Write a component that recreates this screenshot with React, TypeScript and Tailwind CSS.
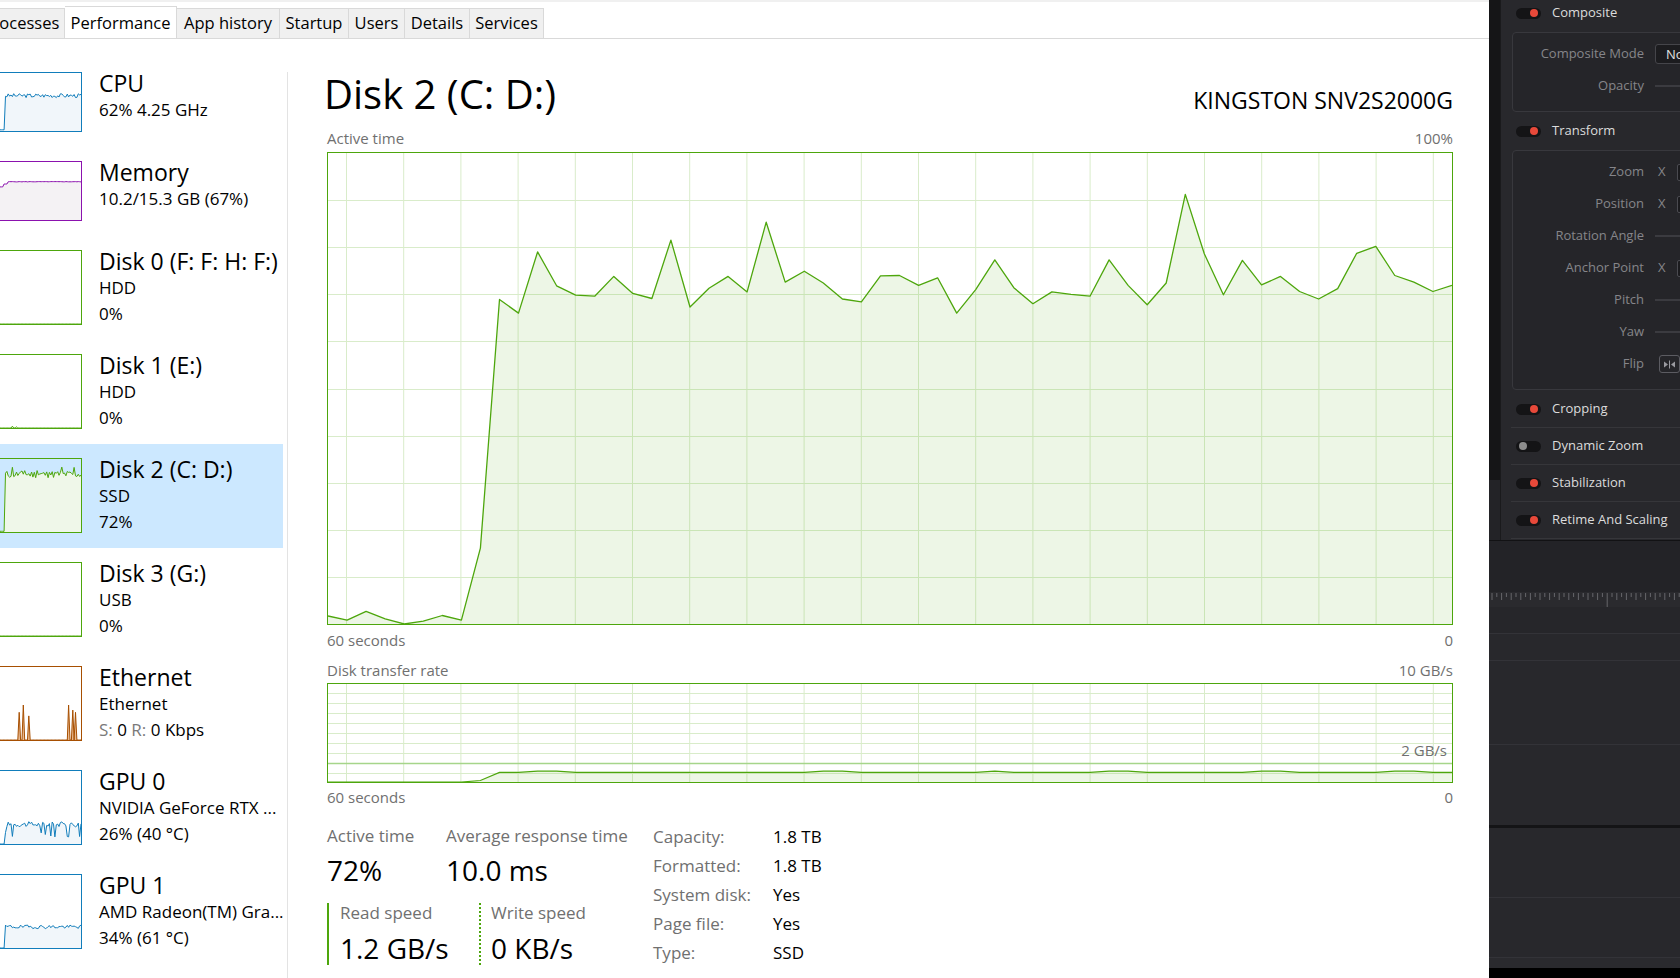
import React from "react";

const green = "#4da60c";

// active time samples, one per second
const active = [
  1.7, 0.8, 2.7, 1.1, 0, 0.6, 1.8, 0.8, 16.1, 68.9, 66, 79, 71.8, 69.8, 69.6, 73.8, 70.2, 69.1, 81.5, 67.3,
  71.3, 73.8, 70.5, 85.3, 72.6, 74.9, 72.4, 69, 68.4, 73.9, 74, 71.9, 73.5, 66, 71, 77.3, 71.4, 68, 70.5, 70,
  69.6, 77.3, 71.9, 67.8, 72.4, 91.2, 78.6, 69.9, 77.2, 72, 73.8, 70.6, 69, 71.2, 78.7, 80.2, 74, 72.6, 70.6, 71.9,
];

const transfer = active.map((v, i) => {
  if (i < 8) return 0;
  if (i === 8) return 0.15;
  const bump = [11, 12, 26, 27, 35, 41, 42, 49, 50, 56, 57].includes(i) ? 0.12 : 0;
  return 0.98 + bump;
});

function seeded(seed: number) {
  let s = seed;
  return () => {
    s = (s * 9301 + 49297) % 233280;
    return s / 233280;
  };
}

function series(seed: number, fn: (i: number, r: () => number) => number, n = 60) {
  const r = seeded(seed);
  return Array.from({ length: n }, (_, i) => Math.max(0, Math.min(100, fn(i, r))));
}

const cpuData = series(3, (i, r) => (i < 4 ? 2 : 61 + (r() - 0.5) * 7));
const memData = series(5, (i, r) => (i < 3 ? 57 : i < 6 ? 62 : 66 + (r() - 0.5) * 0.6));
const disk0Data = series(7, () => 0);
const disk1Data = series(9, (i) => (i === 9 ? 2.5 : i === 12 ? 1.5 : 0));
const disk2Data = series(11, (i, r) => (i < 4 ? 1 : 79 + (r() - 0.5) * 10 + (i % 9 === 0 ? 7 : 0)));
const disk3Data = series(13, () => 0);
const ethData = series(15, (i) => {
  const spikes: Record<number, number> = { 14: 38, 17: 48, 21: 33, 50: 48, 53: 41, 55: 38 };
  return spikes[i] ?? 0;
});
const gpu0Data = series(17, (i, r) => (i < 4 ? 0 : 27 + (r() - 0.5) * 7 - (r() > 0.9 ? 14 : 0)));
const gpu1Data = series(19, (i, r) => (i < 4 ? 0 : 29 + (r() - 0.5) * 5));

type Item = {
  title: string;
  lines: React.ReactNode[];
  box: string;
  h: number;
  stroke: string;
  fill: string;
  data: number[];
  selected?: boolean;
};

const items: Item[] = [
  { title: "CPU", lines: ["62% 4.25 GHz"], box: "h-[60px] border-[#117dbb]", h: 58, stroke: "#117dbb", fill: "#f1f6fa", data: cpuData },
  { title: "Memory", lines: ["10.2/15.3 GB (67%)"], box: "h-[60px] border-[#8b12ae]", h: 58, stroke: "#8b12ae", fill: "#f4f2f4", data: memData },
  { title: "Disk 0 (F: F: H: F:)", lines: ["HDD", "0%"], box: "h-[75px] border-[#4da60c]", h: 73, stroke: green, fill: "#eff7e9", data: disk0Data },
  { title: "Disk 1 (E:)", lines: ["HDD", "0%"], box: "h-[75px] border-[#4da60c]", h: 73, stroke: green, fill: "#eff7e9", data: disk1Data },
  { title: "Disk 2 (C: D:)", lines: ["SSD", "72%"], box: "h-[75px] border-[#4da60c]", h: 73, stroke: green, fill: "#eff7e9", data: disk2Data, selected: true },
  { title: "Disk 3 (G:)", lines: ["USB", "0%"], box: "h-[75px] border-[#4da60c]", h: 73, stroke: green, fill: "#eff7e9", data: disk3Data },
  {
    title: "Ethernet",
    lines: [
      "Ethernet",
      <span key="e">
        <span className="text-[#7a7a7a]">S:</span> 0 <span className="text-[#7a7a7a]">R:</span> 0 Kbps
      </span>,
    ],
    box: "h-[75px] border-[#a74f01]",
    h: 73,
    stroke: "#a74f01",
    fill: "#e9b98f",
    data: ethData,
  },
  { title: "GPU 0", lines: ["NVIDIA GeForce RTX ...", "26% (40 °C)"], box: "h-[75px] border-[#117dbb]", h: 73, stroke: "#117dbb", fill: "#f1f6fa", data: gpu0Data },
  { title: "GPU 1", lines: ["AMD Radeon(TM) Gra...", "34% (61 °C)"], box: "h-[75px] border-[#117dbb]", h: 73, stroke: "#117dbb", fill: "#f1f6fa", data: gpu1Data },
];

function Spark({ data, w, h, stroke, fill }: { data: number[]; w: number; h: number; stroke: string; fill: string }) {
  const pts = data.map((v, i) => `${((i * w) / (data.length - 1)).toFixed(1)},${(h - (v / 100) * h).toFixed(1)}`).join(" ");
  return (
    <svg width={w} height={h} className="block">
      <polygon points={`0,${h} ${pts} ${w},${h}`} fill={fill} />
      <polyline points={pts} fill="none" stroke={stroke} strokeWidth={1} />
    </svg>
  );
}

function ActiveChart() {
  const w = 1124;
  const h = 471;
  const pts = active.map((v, i) => `${((i * w) / 59).toFixed(1)},${(h - (v / 100) * h).toFixed(1)}`).join(" ");
  return (
    <div className="w-[1126px] h-[473px] border border-[#4da60c]">
      <svg width={w} height={h} className="block">
        {Array.from({ length: 20 }, (_, k) => (
          <line key={"v" + k} x1={18.5 + 57.2 * k} x2={18.5 + 57.2 * k} y1={0} y2={h} stroke="#d9ecca" strokeWidth={1} />
        ))}
        {Array.from({ length: 9 }, (_, k) => (
          <line key={"h" + k} x1={0} x2={w} y1={Math.round(((k + 1) * h) / 10) + 0.5} y2={Math.round(((k + 1) * h) / 10) + 0.5} stroke="#d9ecca" strokeWidth={1} />
        ))}
        <polygon points={`0,${h} ${pts} ${w},${h}`} fill="rgba(77,166,12,0.1)" />
        <polyline points={pts} fill="none" stroke={green} strokeWidth={1.3} strokeLinejoin="round" />
      </svg>
    </div>
  );
}

function TransferChart() {
  const w = 1124;
  const h = 98;
  const pts = transfer.map((v, i) => `${((i * w) / 59).toFixed(1)},${(h - v * 9.8).toFixed(1)}`).join(" ");
  return (
    <div className="relative w-[1126px] h-[100px] border border-[#4da60c]">
      <svg width={w} height={h} className="block">
        {Array.from({ length: 20 }, (_, k) => (
          <line key={"v" + k} x1={18.5 + 57.2 * k} x2={18.5 + 57.2 * k} y1={0} y2={h} stroke="#d9ecca" strokeWidth={1} />
        ))}
        {Array.from({ length: 9 }, (_, k) => (
          <line key={"h" + k} x1={0} x2={w} y1={9 + k * 10 + 0.5} y2={9 + k * 10 + 0.5} stroke={k === 7 ? "#a6d58a" : "#d9ecca"} strokeWidth={k === 7 ? 1.5 : 1} />
        ))}
        <polygon points={`0,${h} ${pts} ${w},${h}`} fill="rgba(77,166,12,0.1)" />
        <polyline points={pts} fill="none" stroke={green} strokeWidth={1.2} />
      </svg>
      <span className="absolute right-[5px] top-[56px] text-[15px] leading-[20px] text-[#707070]">2 GB/s</span>
    </div>
  );
}

function Sidebar() {
  return (
    <div className="w-[287px] shrink-0 pt-[19px] pr-[4px]">
      {items.map((it) => (
        <div key={it.title} className={`flex items-start pt-[14px] pb-[15px] ${it.selected ? "bg-[#cce8ff]" : ""}`}>
          <div className={`w-[82px] shrink-0 border border-l-0 ${it.box}`}>
            <Spark data={it.data} w={81} h={it.h} stroke={it.stroke} fill={it.fill} />
          </div>
          <div className="ml-[17px] mt-[-2px] mb-[-6px] whitespace-nowrap text-black">
            <div className="text-[23px] leading-[27px]">{it.title}</div>
            {it.lines.map((l, i) => (
              <div key={i} className="text-[17px] leading-[26px]">
                {l}
              </div>
            ))}
          </div>
        </div>
      ))}
    </div>
  );
}

function Tabs() {
  const tab = "h-[30px] shrink-0 flex items-center justify-center border-t border-r border-[#d9d9d9] bg-[#f0f0f0] text-[16.5px] text-black";
  return (
    <div className="flex items-end h-[39px] border-t-2 border-t-[#f0f0f0] border-b border-b-[#d9d9d9] overflow-hidden">
      <div className={`${tab} w-[87px] ml-[-22px]`}>Processes</div>
      <div className="h-[33px] w-[112px] mb-[-1px] shrink-0 flex items-center justify-center pt-[1px] border-t border-r border-[#d9d9d9] bg-white text-[16.5px] text-black">
        Performance
      </div>
      <div className={`${tab} w-[103px]`}>App history</div>
      <div className={`${tab} w-[69px]`}>Startup</div>
      <div className={`${tab} w-[56px]`}>Users</div>
      <div className={`${tab} w-[65px]`}>Details</div>
      <div className={`${tab} w-[74px]`}>Services</div>
    </div>
  );
}

function Stats() {
  const rows: [string, string][] = [
    ["Capacity:", "1.8 TB"],
    ["Formatted:", "1.8 TB"],
    ["System disk:", "Yes"],
    ["Page file:", "Yes"],
    ["Type:", "SSD"],
  ];
  return (
    <div className="flex mt-[17px]">
      <div className="w-[326px] shrink-0">
        <div className="flex">
          <div className="w-[119px]">
            <div className="text-[17px] leading-[24px] text-[#707070]">Active time</div>
            <div className="text-[28px] leading-[36px] mt-[4px] text-black">72%</div>
          </div>
          <div>
            <div className="text-[17px] leading-[24px] text-[#707070]">Average response time</div>
            <div className="text-[28px] leading-[36px] mt-[4px] text-black">10.0 ms</div>
          </div>
        </div>
        <div className="flex mt-[15px]">
          <div className="w-[152px] h-[62px] border-l-2 border-[#4da60c] pl-[11px]">
            <div className="text-[17px] leading-[20px] text-[#707070]">Read speed</div>
            <div className="text-[28px] leading-[36px] mt-[7px] text-black">1.2 GB/s</div>
          </div>
          <div className="h-[62px] border-l-2 border-dotted border-[#4da60c] pl-[10px]">
            <div className="text-[17px] leading-[20px] text-[#707070]">Write speed</div>
            <div className="text-[28px] leading-[36px] mt-[7px] text-black">0 KB/s</div>
          </div>
        </div>
      </div>
      <div className="grid grid-cols-[120px_auto] mt-[-2px] text-[17px] leading-[29px]">
        {rows.map(([k, v]) => (
          <React.Fragment key={k}>
            <div className="text-[#707070]">{k}</div>
            <div className="text-black">{v}</div>
          </React.Fragment>
        ))}
      </div>
    </div>
  );
}

function Main() {
  return (
    <div className="flex-1 pl-[39px] pr-[36px] pt-[27px]">
      <div className="flex items-baseline justify-between">
        <div className="ml-[-3px] text-[40px] leading-[56px] text-black">Disk 2 (C: D:)</div>
        <div className="text-[23px] text-black">KINGSTON SNV2S2000G</div>
      </div>
      <div className="flex justify-between mt-[6px] text-[15px] leading-[20px] text-[#707070]">
        <span>Active time</span>
        <span>100%</span>
      </div>
      <div className="mt-[4px]">
        <ActiveChart />
      </div>
      <div className="flex justify-between mt-[5px] text-[15px] leading-[20px] text-[#707070]">
        <span>60 seconds</span>
        <span>0</span>
      </div>
      <div className="flex justify-between mt-[10px] text-[15px] leading-[20px] text-[#707070]">
        <span>Disk transfer rate</span>
        <span>10 GB/s</span>
      </div>
      <div className="mt-[3px]">
        <TransferChart />
      </div>
      <div className="flex justify-between mt-[4px] text-[15px] leading-[20px] text-[#707070]">
        <span>60 seconds</span>
        <span>0</span>
      </div>
      <Stats />
    </div>
  );
}

function Toggle({ on }: { on: boolean }) {
  return (
    <div className={`w-[25px] h-[11px] rounded-full bg-[#141416] flex items-center px-[3px] ${on ? "justify-end" : "justify-start"}`}>
      <div className={`w-[8px] h-[8px] rounded-full ${on ? "bg-[#e8493a]" : "bg-[#8c8c8c]"}`} />
    </div>
  );
}

function Header({ label, on = true }: { label: string; on?: boolean }) {
  return (
    <div className="flex items-center h-[24px] pl-[15px]">
      <Toggle on={on} />
      <span className="ml-[11px] text-[13px] text-[#dcdcdc] whitespace-nowrap">{label}</span>
    </div>
  );
}

function Field({ label, children }: { label: string; children: React.ReactNode }) {
  return (
    <div className="flex items-center h-[32px]">
      <div className="w-[131px] shrink-0 text-right text-[13px] text-[#85858a] whitespace-nowrap">{label}</div>
      <div className="ml-[11px] flex-1 flex items-center">{children}</div>
    </div>
  );
}

const Slider = () => <div className="h-[2px] w-full bg-[#3b3b40]" />;
const XInput = () => (
  <div className="flex items-center">
    <span className="ml-[3px] text-[13px] text-[#85858a]">X</span>
    <div className="ml-[11px] w-[40px] h-[17px] rounded-[2px] border border-[#4a4a50] bg-[#1b1b1e]" />
  </div>
);

function Resolve() {
  return (
    <div className="w-[191px] shrink-0 h-[978px] flex flex-col bg-[#28282c] overflow-hidden">
      <div className="flex h-[541px] border-b border-[#121214]">
        <div className="w-[11px] shrink-0 flex flex-col">
          <div className="h-[480px] bg-[#151517]" />
          <div className="flex-1 bg-[#232327]" />
        </div>
        <div className="flex-1 pt-[1px] bg-[#28282c] border-l border-[#1a1a1c] whitespace-nowrap">
          <Header label="Composite" />
          <div className="ml-[11px] mt-[7px] w-[200px] h-[80px] pt-[5px] rounded-[4px] border border-[#38383d] bg-[#252529]">
            <Field label="Composite Mode">
              <div className="w-[60px] h-[20px] rounded-[3px] border border-[#45454a] bg-[#1c1c1f] pl-[10px] text-[13px] leading-[18px] text-[#e0e0e0]">
                Normal
              </div>
            </Field>
            <Field label="Opacity">
              <Slider />
            </Field>
          </div>
          <div className="mt-[7px]">
            <Header label="Transform" />
          </div>
          <div className="ml-[11px] mt-[7px] w-[200px] h-[240px] pt-[5px] rounded-[4px] border border-[#38383d] bg-[#252529]">
            <Field label="Zoom">
              <XInput />
            </Field>
            <Field label="Position">
              <XInput />
            </Field>
            <Field label="Rotation Angle">
              <Slider />
            </Field>
            <Field label="Anchor Point">
              <XInput />
            </Field>
            <Field label="Pitch">
              <Slider />
            </Field>
            <Field label="Yaw">
              <Slider />
            </Field>
            <Field label="Flip">
              <div className="ml-[4px] w-[21px] h-[18px] rounded-[3px] border border-[#5c5c62] flex items-center justify-center">
                <svg width="13" height="9" viewBox="0 0 13 9">
                  <path d="M1 1.5 L5 4.5 L1 7.5 Z" fill="#9a9aa0" />
                  <path d="M6.5 0.5 V8.5" stroke="#9a9aa0" strokeWidth="1" />
                  <path d="M12 1.5 L8 4.5 L12 7.5 Z" fill="#9a9aa0" />
                </svg>
              </div>
            </Field>
          </div>
          <div className="ml-[10px] mt-[1px]">
            {["Cropping", "Dynamic Zoom", "Stabilization", "Retime And Scaling"].map((l) => (
              <div key={l} className="flex items-center h-[37px] pl-[5px] border-b border-[#36363a]">
                <Toggle on={l !== "Dynamic Zoom"} />
                <span className="ml-[11px] text-[13px] text-[#dcdcdc]">{l}</span>
              </div>
            ))}
          </div>
        </div>
      </div>
      <div className="h-[51px] bg-[#232327]" />
      <div className="h-[15px] bg-[#2a2a2e]">
        <svg width="191" height="15" className="block">
          {Array.from({ length: 40 }, (_, k) => (
            <line key={k} x1={3 + k * 4.8} x2={3 + k * 4.8} y1={1} y2={k % 25 === 24 ? 15 : k % 2 ? 5 : 8} stroke="#66666b" strokeWidth={1} />
          ))}
        </svg>
      </div>
      <div className="h-[27px] bg-[#26262a] border-b border-[#333338]" />
      <div className="h-[27px] bg-[#28282c] border-b border-[#333338]" />
      <div className="h-[84px] bg-[#28282c] border-b border-[#333338]" />
      <div className="h-[83px] bg-[#28282c] border-b-[3px] border-[#141416]" />
      <div className="h-[70px] bg-[#28282c] border-b border-[#333338]" />
      <div className="h-[60px] bg-[#28282c] border-b border-[#333338]" />
      <div className="h-[10px] bg-[#2a2a2e]" />
      <div className="flex-1 bg-black" />
    </div>
  );
}

export default function App() {
  return (
    <div className="w-[1680px] h-[978px] flex overflow-hidden bg-white font-['Open_Sans',sans-serif]">
      <div className="w-[1489px] shrink-0 flex flex-col">
        <Tabs />
        <div className="flex flex-1 overflow-hidden">
          <Sidebar />
          <div className="w-px shrink-0 bg-[#e3e3e3] mt-[33px]" />
          <Main />
        </div>
      </div>
      <Resolve />
    </div>
  );
}
